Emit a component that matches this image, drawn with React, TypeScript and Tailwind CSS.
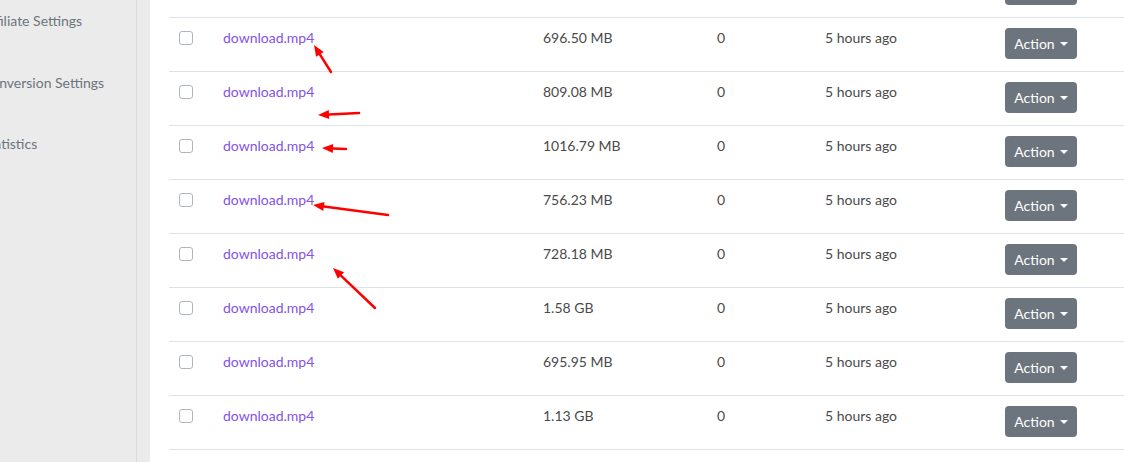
const rows = [
  { size: "696.50 MB" },
  { size: "809.08 MB" },
  { size: "1016.79 MB" },
  { size: "756.23 MB" },
  { size: "728.18 MB" },
  { size: "1.58 GB" },
  { size: "695.95 MB" },
  { size: "1.13 GB" },
];

const sideItems = ["Affiliate Settings", "Conversion Settings", "Statistics"];

// red annotation arrows drawn over the table: [tail x, tail y, tip x, tip y]
const arrows = [
  [331, 72, 314, 45],
  [359, 113, 318, 115],
  [346, 149, 322, 148],
  [388, 215, 313, 205],
  [375, 308, 333, 268],
];

function ActionButton() {
  return (
    <button
      type="button"
      className="flex h-[31px] w-[72px] items-center justify-center gap-[5px] rounded-[4px] bg-[#6c757d] text-[14px] text-white"
    >
      Action
      <span className="mt-[1px] h-0 w-0 border-x-[4px] border-t-[4px] border-x-transparent border-t-white" />
    </button>
  );
}

function Row({ size }: { size: string }) {
  return (
    <div className="flex h-[54px] border-b border-[#dee2e6] pt-[10px] text-[14px] text-[#4a4a4a]">
      <div className="w-[54px] pl-[10px] pt-[3px]">
        <span className="block h-[14px] w-[14px] rounded-[3px] border border-[#adb5bd] bg-white" />
      </div>
      <div className="mt-[-1px] w-[320px] text-[#8352e8]">download.mp4</div>
      <div className="mt-[-1px] w-[174px]">{size}</div>
      <div className="mt-[-1px] w-[108px]">0</div>
      <div className="mt-[-1px] w-[180px]">5 hours ago</div>
      <div>
        <ActionButton />
      </div>
    </div>
  );
}

export default function App() {
  return (
    <div
      className="relative flex h-[462px] w-[1124px] overflow-hidden bg-white"
      style={{ fontFamily: "Lato, 'Open Sans', sans-serif" }}
    >
      <aside className="w-[137px] shrink-0 overflow-hidden border-r border-[#dcdcdc] bg-[#ebebeb] pt-[10px] text-[14px] text-[#6c757d]">
        {sideItems.map((item) => (
          <div key={item} className="ml-[-18px] h-[61.5px] whitespace-nowrap">
            {item}
          </div>
        ))}
      </aside>
      <div className="w-[13px] shrink-0 bg-[#ebebeb]" />
      <main className="flex-1 pl-[19px]">
        <div className="flex h-[18px] border-b border-[#dee2e6]">
          <div className="ml-[836px] mt-[-26px] h-[31px] w-[72px] rounded-[4px] bg-[#6c757d]" />
        </div>
        {rows.map((row, i) => (
          <Row key={i} size={row.size} />
        ))}
      </main>
      <svg className="pointer-events-none absolute left-0 top-0" width="1124" height="462">
        {arrows.map(([x1, y1, x2, y2], i) => {
          const dx = x2 - x1;
          const dy = y2 - y1;
          const len = Math.hypot(dx, dy);
          const ux = dx / len;
          const uy = dy / len;
          const bx = x2 - ux * 11;
          const by = y2 - uy * 11;
          const px = -uy * 4.5;
          const py = ux * 4.5;
          return (
            <g key={i}>
              <line x1={x1} y1={y1} x2={bx} y2={by} stroke="#f00" strokeWidth="2.5" strokeLinecap="round" />
              <polygon points={`${x2},${y2} ${bx + px},${by + py} ${bx - px},${by - py}`} fill="#f00" />
            </g>
          );
        })}
      </svg>
    </div>
  );
}
